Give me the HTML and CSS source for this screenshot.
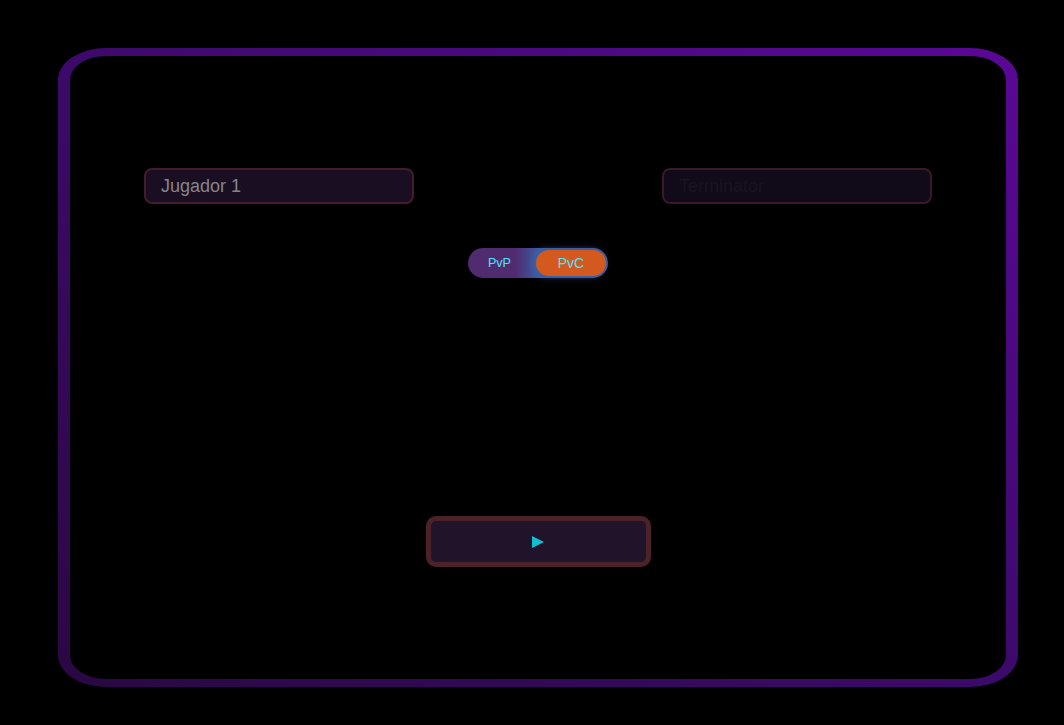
FILE: index.html
```html
<!DOCTYPE html>
<html lang="es">
<head>
<meta charset="utf-8">
<title>Juego</title>
<link rel="stylesheet" href="styles.css">
</head>
<body>
  <div class="frame">
    <div class="panel">
      <div class="players">
        <input class="name-input" type="text" value="Jugador 1">
        <input class="name-input cpu" type="text" value="Terminator" disabled>
      </div>
      <div class="toggle">
        <span class="opt">PvP</span>
        <span class="opt active">PvC</span>
      </div>
      <div class="spacer"></div>
      <button class="play" type="button"><span class="tri"></span></button>
    </div>
  </div>
</body>
</html>
```

FILE: styles.css
```css
html, body {
  margin: 0;
  padding: 0;
  background: #000;
  width: 1064px;
  height: 725px;
  overflow: hidden;
  font-family: "Liberation Sans", Arial, sans-serif;
}

body {
  padding-top: 48px;
  box-sizing: border-box;
}

.frame {
  margin-left: 58px;
  width: 960px;
  height: 639px;
  box-sizing: border-box;
  padding: 8px 12px;
  border-radius: 48px / 32px;
  background: linear-gradient(to top right, #2a0842 0%, #3c0a6a 50%, #5a0896 100%);
}

.panel {
  width: 100%;
  height: 100%;
  background: #000;
  border-radius: 36px / 24px;
  display: flex;
  flex-direction: column;
  align-items: center;
  padding-top: 112px;
  box-sizing: border-box;
}

.players {
  width: 100%;
  box-sizing: border-box;
  padding: 0 74px;
  display: flex;
  justify-content: space-between;
}

.name-input {
  width: 270px;
  height: 36px;
  box-sizing: border-box;
  border: 2px solid #421c28;
  border-radius: 8px;
  background: #1a0f22;
  color: #85848c;
  font-family: "Liberation Sans", Arial, sans-serif;
  font-size: 18px;
  padding: 0 0 0 15px;
  outline: none;
}

.name-input.cpu {
  background: #110a18;
  color: #1a1420;
  border-color: #3a1a24;
}

.toggle {
  margin-top: 44px;
  width: 140px;
  height: 30px;
  box-sizing: border-box;
  border-radius: 15px;
  background: linear-gradient(to right, #512b70 0%, #512b70 34%, #3c5ca2 50%, #3c5ca2 100%);
  display: flex;
  align-items: center;
  padding: 2px 2px 2px 1px;
}

.opt {
  flex: 1;
  text-align: center;
  color: #4ee4ff;
  font-size: 12.5px;
  line-height: 26px;
  padding-right: 6px;
}

.opt.active {
  flex: 0 0 70px;
  padding-right: 0;
  height: 26px;
  border-radius: 13px;
  background: #d4591e;
  box-shadow: -3px 0 6px 1px rgba(58, 100, 180, 0.7);
  font-size: 14px;
}

.spacer {
  flex: 0 0 238px;
}

.play {
  width: 225px;
  height: 51px;
  box-sizing: border-box;
  border: 5px solid #4a2228;
  border-radius: 10px;
  background: #20132a;
  display: flex;
  align-items: center;
  justify-content: center;
  padding: 0;
  cursor: pointer;
}

.tri {
  width: 0;
  height: 0;
  border-top: 6px solid transparent;
  border-bottom: 6px solid transparent;
  border-left: 12px solid #12bfd2;
  margin-left: -1px;
}
```
